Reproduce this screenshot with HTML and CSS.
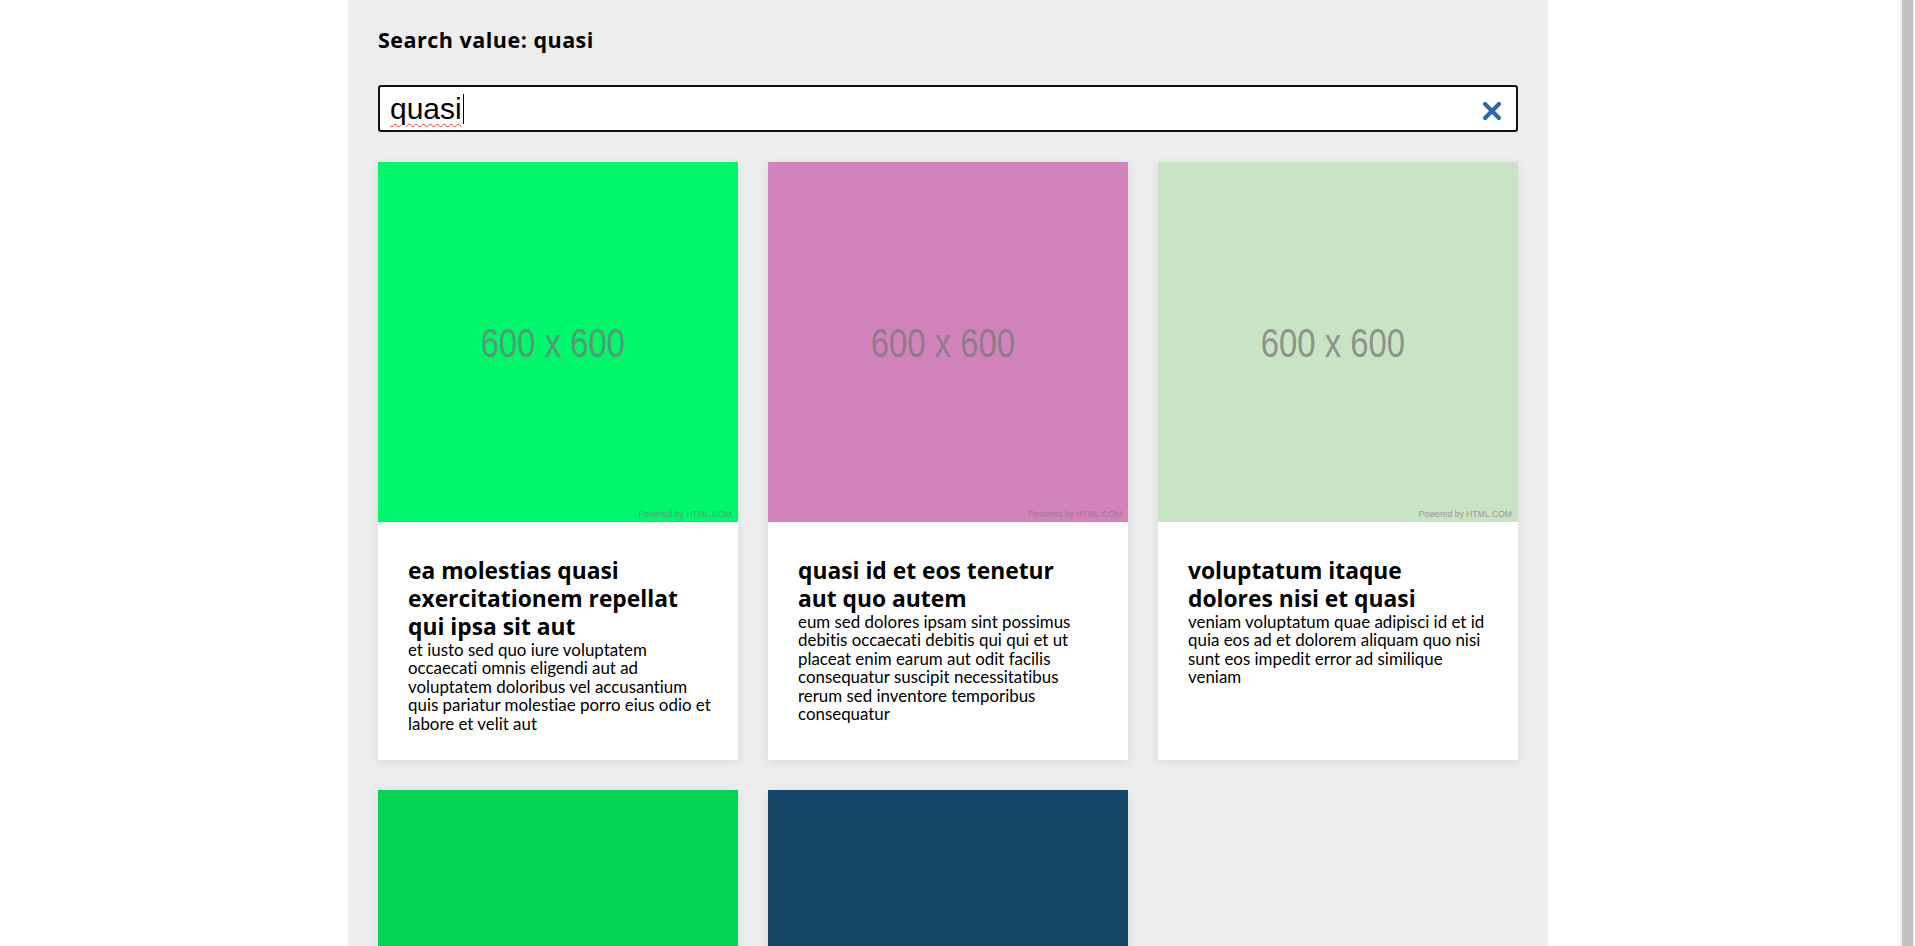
FILE: index.html
```html
<!DOCTYPE html>
<html lang="en">
<head>
<meta charset="utf-8">
<title>Search</title>
<link rel="stylesheet" href="styles.css">
</head>
<body>
<main class="container">
  <h1 class="search-title">Search value: quasi</h1>
  <div class="search-box">
    <div class="search-input"><span class="typed">quasi</span><span class="caret"></span></div>
    <button class="clear-btn" aria-label="Clear">
      <svg width="20" height="20" viewBox="0 0 20 20"><path d="M3 3 L17 17 M17 3 L3 17" stroke="#2c6aa7" stroke-width="4.2" stroke-linecap="round" fill="none"/></svg>
    </button>
  </div>
  <section class="grid">
    <article class="card">
      <div class="thumb" style="background:#00f76c"><span class="dim">600 x 600</span><span class="powered">Powered by HTML.COM</span></div>
      <div class="card-body">
        <h2 class="card-title">ea molestias quasi exercitationem repellat qui ipsa sit aut</h2>
        <p class="card-text">et iusto sed quo iure voluptatem occaecati omnis eligendi aut ad voluptatem doloribus vel accusantium quis pariatur molestiae porro eius odio et labore et velit aut</p>
      </div>
    </article>
    <article class="card">
      <div class="thumb" style="background:#d383bb"><span class="dim">600 x 600</span><span class="powered">Powered by HTML.COM</span></div>
      <div class="card-body">
        <h2 class="card-title">quasi id et eos tenetur aut quo autem</h2>
        <p class="card-text">eum sed dolores ipsam sint possimus debitis occaecati debitis qui qui et ut placeat enim earum aut odit facilis consequatur suscipit necessitatibus rerum sed inventore temporibus consequatur</p>
      </div>
    </article>
    <article class="card">
      <div class="thumb" style="background:#c8e4c5"><span class="dim">600 x 600</span><span class="powered">Powered by HTML.COM</span></div>
      <div class="card-body">
        <h2 class="card-title">voluptatum itaque dolores nisi et quasi</h2>
        <p class="card-text">veniam voluptatum quae adipisci id et id quia eos ad et dolorem aliquam quo nisi sunt eos impedit error ad similique veniam</p>
      </div>
    </article>
    <article class="card">
      <div class="thumb" style="background:#00d452"><span class="dim">600 x 600</span><span class="powered">Powered by HTML.COM</span></div>
      <div class="card-body">
        <h2 class="card-title">quasi quae et et</h2>
        <p class="card-text">doloribus sit quasi eum et eos ea dolorem nulla</p>
      </div>
    </article>
    <article class="card">
      <div class="thumb" style="background:#15476a"><span class="dim">600 x 600</span><span class="powered">Powered by HTML.COM</span></div>
      <div class="card-body">
        <h2 class="card-title">ut quasi necessitatibus</h2>
        <p class="card-text">quasi sed enim et ipsa quo eos</p>
      </div>
    </article>
  </section>
</main>
<div class="scrollbar" aria-hidden="true"><div class="scroll-thumb"></div></div>
</body>
</html>
```
FILE: styles.css
```css
html, body {
  margin: 0;
  padding: 0;
  background: #ffffff;
}
html {
  overflow: hidden;
}
body {
  font-family: "Open Sans", "Noto Sans", sans-serif;
  color: #000;
  padding-right: 19px;
}
.container {
  width: 1200px;
  margin: 0 auto;
  box-sizing: border-box;
  padding: 28px 30px 30px;
  background: #ededed;
  min-height: 100vh;
}
.search-title {
  margin: 0 0 33px;
  font-size: 21.5px;
  line-height: 24px;
  font-weight: 700;
  letter-spacing: 0.5px;
}
.search-box {
  height: 47px;
  box-sizing: border-box;
  border: 2px solid #111;
  border-radius: 3px;
  background: #fff;
  display: flex;
  align-items: center;
}
.search-input {
  flex: 1;
  padding-left: 10px;
  font-family: "Liberation Sans", Arial, sans-serif;
  font-size: 30px;
  line-height: 36px;
  display: flex;
  align-items: center;
  height: 100%;
}
.typed {
  text-decoration: underline wavy #e33;
  text-decoration-thickness: 1px;
  text-underline-offset: 4px;
}
.caret {
  display: inline-block;
  width: 1px;
  height: 30px;
  background: #000;
  margin-left: 1px;
}
.clear-btn {
  border: 0;
  background: transparent;
  padding: 0;
  margin: 5px 14px 0 0;
  width: 20px;
  height: 20px;
  display: flex;
}
.grid {
  margin-top: 30px;
  display: grid;
  grid-template-columns: repeat(3, 360px);
  gap: 30px;
}
.card {
  background: #fff;
  box-shadow: 0 2px 10px rgba(0, 0, 0, 0.08);
}
.thumb {
  position: relative;
  height: 360px;
  display: flex;
  align-items: center;
  justify-content: center;
}
.dim {
  font-family: "Liberation Sans", Arial, sans-serif;
  font-size: 40px;
  color: rgba(120, 120, 120, 0.75);
  transform: scaleX(0.82);
  margin: 2px 10px 0 0;
}
.powered {
  position: absolute;
  right: 6px;
  bottom: 3px;
  font-family: "Liberation Sans", Arial, sans-serif;
  font-size: 8.6px;
  color: rgba(120, 120, 120, 0.7);
}
.card-body {
  padding: 35px 26.5px 27px 30px;
}
.card-title {
  margin: 0 3.5px 0 0;
  font-size: 22.8px;
  line-height: 28px;
  font-weight: 700;
}
.card-text {
  margin: 0;
  font-family: Lato, "Open Sans", sans-serif;
  font-size: 16.9px;
  line-height: 18.4px;
  font-variant-ligatures: none;
}
.scrollbar {
  position: fixed;
  top: 0;
  right: 0;
  bottom: 0;
  width: 15px;
  background: #f1f1f1;
}
.scroll-thumb {
  margin: 0 2px;
  height: 100%;
  background: #c1c1c1;
}
```
